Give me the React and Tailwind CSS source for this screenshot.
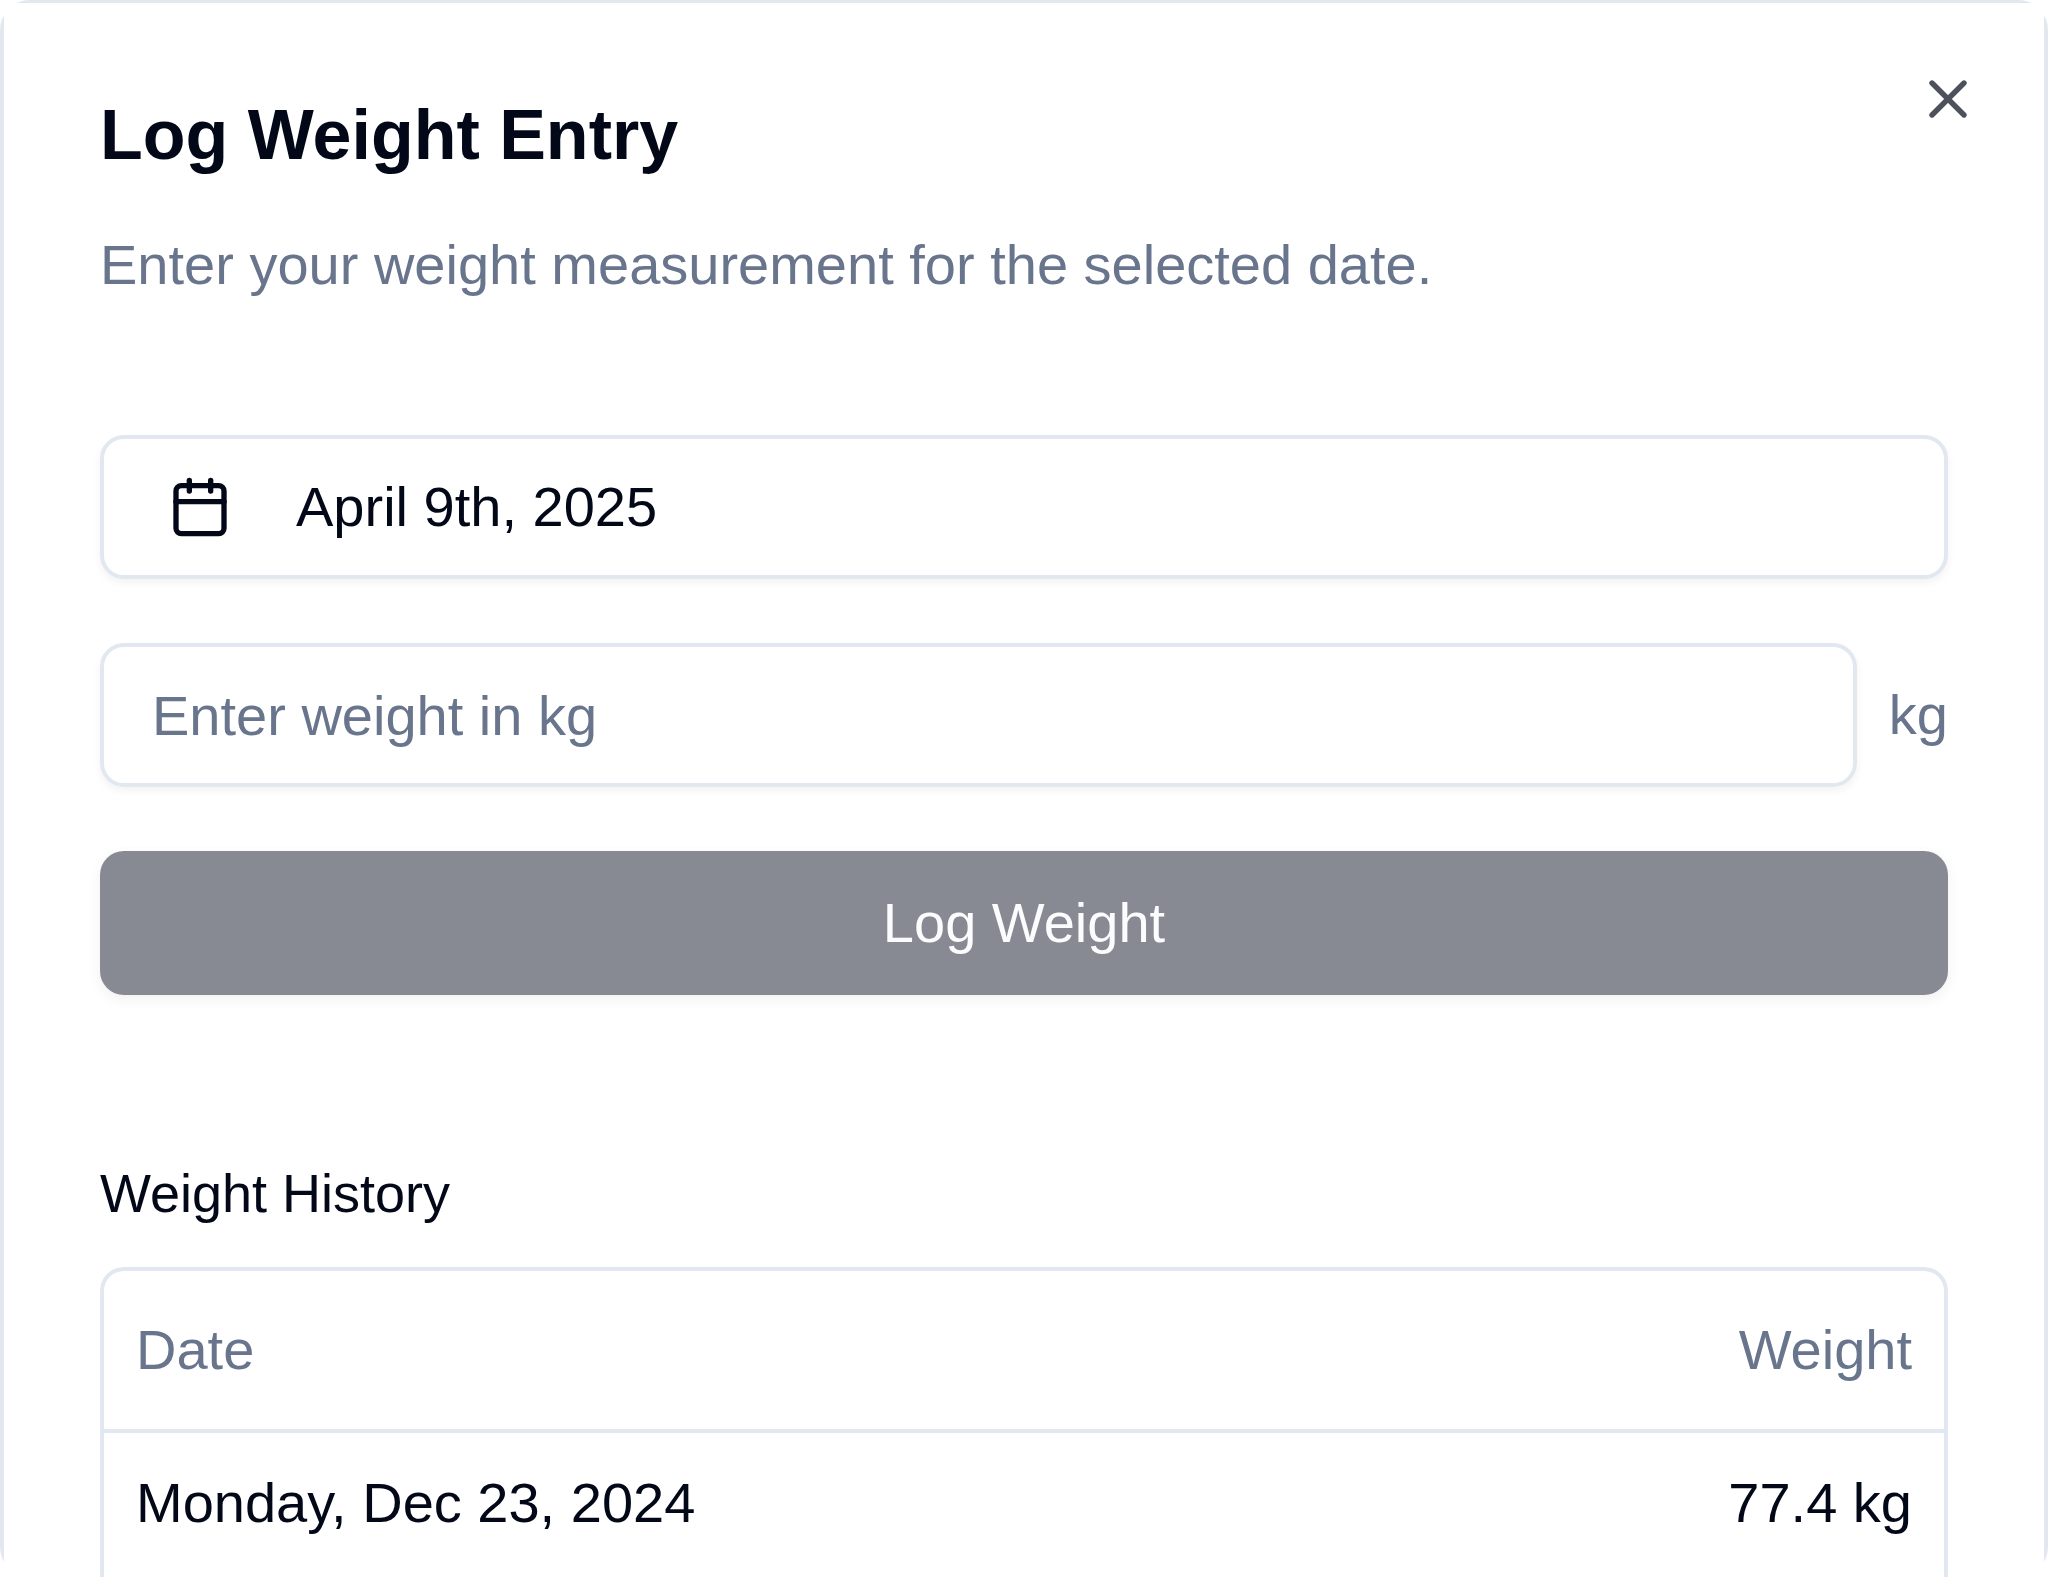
import { Calendar, X } from "lucide-react";

const history = [{ date: "Monday, Dec 23, 2024", weight: "77.4 kg" }];

function DialogHeader() {
  return (
    <header className="flex items-start justify-between">
      <div className="flex flex-col gap-14">
        <h1 className="text-[70px] leading-[72px] font-bold">Log Weight Entry</h1>
        <p className="text-[56px] leading-[76px] text-[#68758c]">
          Enter your weight measurement for the selected date.
        </p>
      </div>
      <button type="button" aria-label="Close" className="-mt-8 -mr-8 opacity-70">
        <X className="size-16" strokeWidth={2} />
      </button>
    </header>
  );
}

function WeightForm() {
  return (
    <form className="mt-33 flex flex-col gap-16 text-[56px] leading-[76px]">
      <button
        type="button"
        className="flex h-36 w-full items-center gap-16 rounded-3xl border-4 border-[#e2e8f0] bg-white px-16 shadow-[0_4px_8px_rgba(0,0,0,0.05)]"
      >
        <Calendar className="size-16" strokeWidth={2} />
        <span>April 9th, 2025</span>
      </button>
      <div className="flex items-center gap-8">
        <input
          id="weight"
          type="text"
          inputMode="decimal"
          placeholder="Enter weight in kg"
          className="h-36 min-w-0 flex-1 rounded-3xl border-4 border-[#e2e8f0] bg-transparent px-12 shadow-[0_4px_8px_rgba(0,0,0,0.05)] placeholder:text-[#68758c]"
        />
        <label htmlFor="weight" className="text-[#68758c]">
          kg
        </label>
      </div>
      <button
        type="submit"
        disabled
        className="flex h-36 w-full items-center justify-center rounded-3xl bg-[#121829] text-[#f8fafc] opacity-50 shadow-[0_4px_12px_rgba(0,0,0,0.1)]"
      >
        Log Weight
      </button>
    </form>
  );
}

function WeightHistory() {
  return (
    <section className="mt-40 flex flex-col gap-9">
      <h2 className="text-[54px] leading-[76px]">Weight History</h2>
      <div className="rounded-t-3xl border-4 border-b-0 border-[#e2e8f0] pb-8">
        <table className="w-full text-[56px] leading-[76px]">
          <thead>
            <tr className="h-40 border-b-4 border-[#e2e8f0] text-[#68758c]">
              <th className="px-8 text-left font-normal">Date</th>
              <th className="px-8 text-right font-normal">Weight</th>
            </tr>
          </thead>
          <tbody>
            {history.map((entry) => (
              <tr key={entry.date}>
                <td className="p-8">{entry.date}</td>
                <td className="p-8 text-right">{entry.weight}</td>
              </tr>
            ))}
          </tbody>
        </table>
      </div>
    </section>
  );
}

export default function App() {
  return (
    <div className="h-screen overflow-hidden rounded-[30px] bg-white font-['Liberation_Sans',Arial,sans-serif] text-[#020817]">
      <main className="min-h-full border-x-4 border-t-3 border-[#e2e8f0] px-24 pt-24">
        <DialogHeader />
        <WeightForm />
        <WeightHistory />
      </main>
    </div>
  );
}
